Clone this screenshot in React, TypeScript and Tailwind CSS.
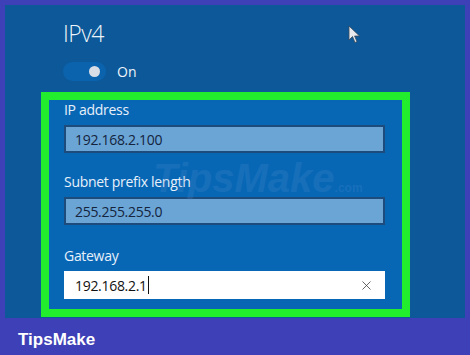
import { X } from 'lucide-react';

function Field({ label, value, active, gap }: { label: string; value: string; active?: boolean; gap: string }) {
  return (
    <div className={'flex flex-col ' + gap}>
      <div className="text-[14px] leading-[20px] tracking-[-0.3px] text-[#e8f0fa]">{label}</div>
      <div
        className={
          active
            ? 'mt-[5px] h-[28px] w-[321px] bg-white flex items-center pl-[11px] pr-[11px] text-[14px] tracking-[-0.3px] text-[#111]'
            : 'mt-[5px] h-[28px] w-[321px] bg-[#6ba5d6] border-2 border-[#1d4c7c] flex items-center pl-[9px] text-[14px] tracking-[-0.3px] text-[#14243d]'
        }
      >
        <span>{value}</span>
        {active && <span className="ml-[1px] h-[18px] w-[1px] bg-[#111]" />}
        {active && <X className="ml-auto text-[#444]" size={15} strokeWidth={1.3} />}
      </div>
    </div>
  );
}

export default function App() {
  return (
    <div
      className="w-[470px] h-[355px] bg-[#3d40b6] flex flex-col overflow-hidden"
      style={{ fontFamily: '"Open Sans", "Noto Sans", sans-serif' }}
    >
      <div className="mt-[5px] mx-[5px] h-[313px] bg-[#0c5898] relative flex flex-col">
        <div className="pl-[58px] pt-[12px] text-[23px] leading-[32px] tracking-[-0.5px] font-light text-[#eef4fb]">IPv4</div>

        <div className="pl-[58px] mt-[12px] flex items-center">
          <div className="w-[43px] h-[19px] rounded-full bg-[#0b63ad] relative">
            <div className="absolute right-[6px] top-[4px] w-[11px] h-[11px] rounded-full bg-[#d8dde6]" />
          </div>
          <span className="ml-[11px] text-[14px] text-[#eef4fb]">On</span>
        </div>

        <div className="ml-[36px] mt-[10px] w-[369px] h-[225px] border-[8px] border-[#22ee2e] bg-[#0767b5] pl-[15px] flex flex-col">
          <Field label="IP address" value="192.168.2.100" gap="mt-0" />
          <Field label="Subnet prefix length" value="255.255.255.0" gap="mt-[19px]" />
          <Field label="Gateway" value="192.168.2.1" active gap="mt-[21px]" />
        </div>

        <svg className="absolute left-[343px] top-[20px]" width="14" height="20" viewBox="0 0 14 20">
          <path d="M1 1 L1 15 L4.5 11.5 L7 17.5 L9 16.7 L6.6 11 L11.5 11 Z" fill="#e8eaee" stroke="#3a4a5a" strokeWidth="0.8" />
        </svg>

        <div
          className="absolute left-[148px] top-[153px] text-[40px] leading-[40px] font-black italic text-[#5a8fd0] opacity-20 pointer-events-none"
          style={{ fontFamily: '"Liberation Sans", sans-serif' }}
        >
          TipsMake<span className="text-[12px] not-italic">.com</span>
        </div>
      </div>

      <div
        className="pl-[18px] pt-[9px] text-[17px] font-bold text-white"
        style={{ fontFamily: '"Liberation Sans", Arial, sans-serif' }}
      >
        TipsMake
      </div>
    </div>
  );
}
